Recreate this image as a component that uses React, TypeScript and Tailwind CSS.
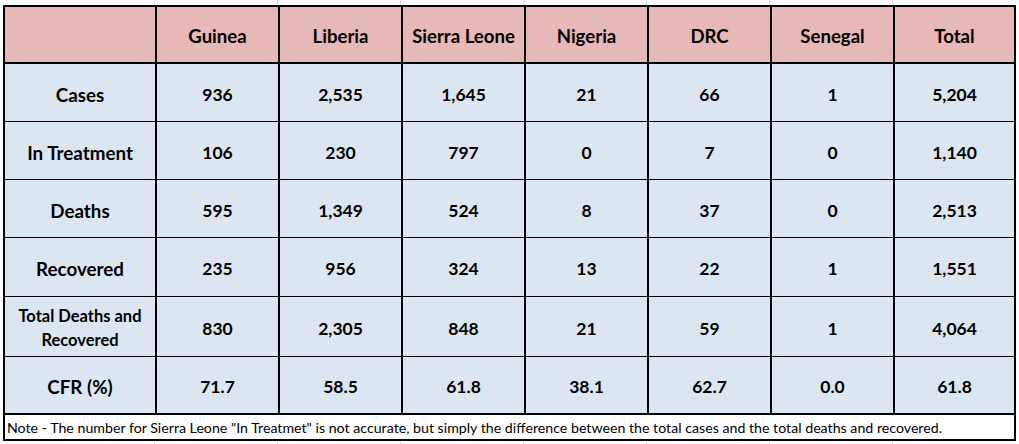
import React from 'react';

const columns = ['Guinea', 'Liberia', 'Sierra Leone', 'Nigeria', 'DRC', 'Senegal', 'Total'];

interface Row {
  label: string;
  values: string[];
  height: string;
  small?: boolean;
  last?: boolean;
}

const rows: Row[] = [
  { label: 'Cases', values: ['936', '2,535', '1,645', '21', '66', '1', '5,204'], height: 'h-[58px]' },
  { label: 'In Treatment', values: ['106', '230', '797', '0', '7', '0', '1,140'], height: 'h-[58px]' },
  { label: 'Deaths', values: ['595', '1,349', '524', '8', '37', '0', '2,513'], height: 'h-[58px]' },
  { label: 'Recovered', values: ['235', '956', '324', '13', '22', '1', '1,551'], height: 'h-[59px]' },
  {
    label: 'Total Deaths and Recovered',
    values: ['830', '2,305', '848', '21', '59', '1', '4,064'],
    height: 'h-[60px]',
    small: true,
  },
  { label: 'CFR (%)', values: ['71.7', '58.5', '61.8', '38.1', '62.7', '0.0', '61.8'], height: 'h-[58px]', last: true },
];

const gridCols = 'grid grid-cols-[152px_repeat(6,123px)_1fr]';

const GridStrip: React.FC<{ height: string }> = ({ height }) => (
  <div className={`flex ${height} pl-[3px]`}>
    <div className="w-[152px] border-r border-[#dadada]" />
    {columns.slice(0, 6).map((c) => (
      <div key={c} className="w-[123px] border-r border-[#dadada]" />
    ))}
  </div>
);

export default function App() {
  return (
    <div className="w-[1019px] h-[444px] bg-white overflow-hidden font-['Lato',sans-serif] text-black">
      <GridStrip height="h-[5px]" />
      <div className="ml-[3px] w-[1013px] border-2 border-black">
        {/* header */}
        <div className={`${gridCols} h-[57px] bg-[#e6b8b7] border-b-2 border-black`}>
          <div className="border-r-2 border-black" />
          {columns.map((c, i) => (
            <div
              key={c}
              className={`flex items-center justify-center pt-[5px] font-bold text-[18.6px] ${
                i < 6 ? 'border-r-2 border-black' : ''
              }`}
            >
              {c}
            </div>
          ))}
        </div>

        {/* body rows */}
        {rows.map((r) => (
          <div
            key={r.label}
            className={`${gridCols} ${r.height} bg-[#dce6f1] border-black ${r.last ? 'border-b-2' : 'border-b'}`}
          >
            <div
              className={`flex items-center justify-center text-center font-bold border-r-2 border-black ${
                r.small ? 'text-[16.5px] leading-[24px] px-1 pt-[2px]' : 'text-[18.8px] pt-[5px]'
              }`}
            >
              {r.label}
            </div>
            {r.values.map((v, i) => (
              <div
                key={i}
                className={`flex items-center justify-center pt-[5px] font-bold text-[17.5px] ${
                  i < 6 ? 'border-r-2 border-black' : ''
                }`}
              >
                {v}
              </div>
            ))}
          </div>
        ))}

        {/* note */}
        <div className="h-[24px] flex items-center pl-[2px] pt-[2px] text-[14.2px] bg-white">
          Note - The number for Sierra Leone "In Treatmet" is not accurate, but simply the difference between the total
          cases and the total deaths and recovered.
        </div>
      </div>
      <GridStrip height="h-[3px]" />
    </div>
  );
}
